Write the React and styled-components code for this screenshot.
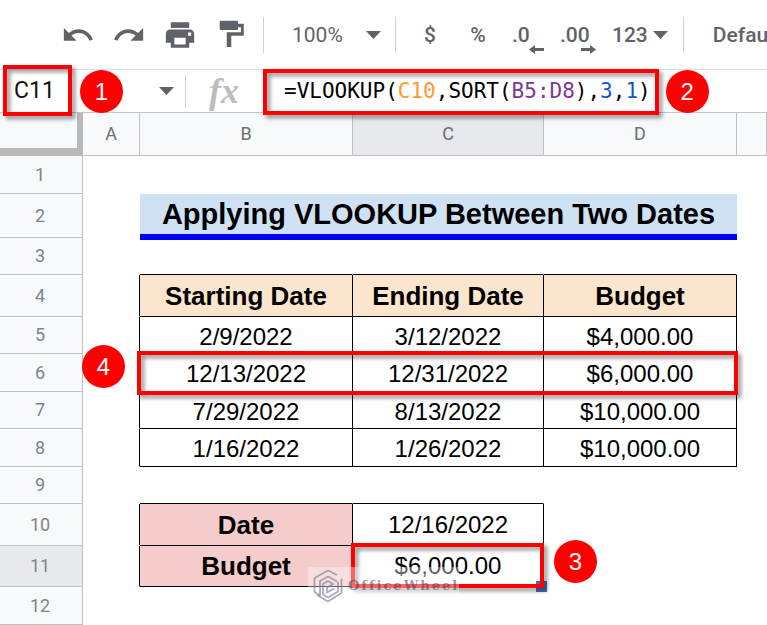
import React from "react";
import styled, { createGlobalStyle, css } from "styled-components";

const GlobalStyle = createGlobalStyle`
  *, *::before, *::after { box-sizing: border-box; }
  body {
    margin: 0;
    background: #fff;
    overflow: hidden;
    font-family: "Liberation Sans", Arial, sans-serif;
  }
`;

const uiFont = `Roboto, "Liberation Sans", sans-serif`;
const iconGray = "#5f6368";
const red = "#ff0000";

/* ---------- annotations ---------- */

const Frame = styled.span`
  position: absolute;
  z-index: 2;
  border: 4px solid ${red};
  filter: drop-shadow(3px 3px 2px rgba(0, 0, 0, 0.45));
  pointer-events: none;
`;

const Badge = styled.span`
  position: absolute;
  z-index: 3;
  width: 43px;
  height: 43px;
  border-radius: 50%;
  background: ${red};
  color: #fff;
  font: 24px/43px "Liberation Sans", Arial, sans-serif;
  text-align: center;
`;

/* ---------- toolbar ---------- */

const Toolbar = styled.div`
  display: flex;
  align-items: center;
  height: 70px;
  padding-left: 61px;
  border-bottom: 1px solid #dadce0;
  overflow: hidden;
`;

const ToolGroup = styled.div`
  display: flex;
  flex: none;
  align-items: center;
  gap: ${(p) => p.$gap}px;
`;

const Separator = styled.span`
  flex: none;
  width: 1px;
  height: ${(p) => p.$height}px;
  margin: 0 ${(p) => p.$after}px 0 ${(p) => p.$before}px;
  background: #d0d3d6;
`;

const ToolButton = styled.button`
  display: flex;
  flex: none;
  align-items: center;
  justify-content: ${(p) => (p.$start ? "flex-start" : "center")};
  gap: 5px;
  position: relative;
  width: ${(p) => (p.$width ? `${p.$width}px` : "auto")};
  height: 34px;
  padding: 0;
  border: 0;
  background: none;
  color: ${iconGray};
  font: 500 21px/32px ${uiFont};
  white-space: nowrap;

  svg { display: block; flex: none; }
`;

const DecimalArrow = styled.svg`
  position: absolute;
  right: -4px;
  bottom: -2px;
`;

const SelectBox = styled.label`
  display: flex;
  flex: none;
  align-items: center;
  position: relative;
  width: 89px;

  svg { position: absolute; right: 0; pointer-events: none; }
`;

const ZoomSelect = styled.select`
  appearance: none;
  width: 100%;
  padding: 0;
  border: 0;
  background: none;
  color: ${iconGray};
  font: 21px/32px ${uiFont};
`;

const Caret = () => (
  <svg width="15" height="8" viewBox="0 0 15 8" aria-hidden="true">
    <path d="M0 0h15L7.500 8z" fill={iconGray} />
  </svg>
);

const UndoIcon = () => (
  <svg width="34" height="34" viewBox="0 0 24 24" fill={iconGray} aria-hidden="true">
    <path d="M12.500 8c-2.650 0-5.050.99-6.900 2.600L2 7v9h9l-3.620-3.620c1.390-1.160 3.160-1.880 5.120-1.880 3.540 0 6.550 2.310 7.600 5.500l2.370-.78C21.080 11.030 17.150 8 12.500 8z" />
  </svg>
);

const RedoIcon = () => (
  <svg width="34" height="34" viewBox="0 0 24 24" fill={iconGray} aria-hidden="true">
    <path d="M18.400 10.600C16.550 8.990 14.150 8 11.500 8c-4.650 0-8.580 3.030-9.960 7.220L3.900 16c1.050-3.190 4.050-5.500 7.600-5.500 1.950 0 3.730.72 5.120 1.880L13 16h9V7l-3.600 3.600z" />
  </svg>
);

const PrintIcon = () => (
  <svg width="34" height="34" viewBox="0 0 24 24" fill={iconGray} fillRule="evenodd" aria-hidden="true">
    <path d="M5.500 3h13v4h-13z" />
    <path d="M5 8.200h14c1.660 0 3 1.340 3 3V17.500h-3.500V21h-13v-3.500H2v-6.300c0-1.660 1.340-3 3-3zM8 14v4.700h8V14zM17.700 10.300v2.200h2.200v-2.200z" />
  </svg>
);

const PaintIcon = () => (
  <svg width="34" height="34" viewBox="0 0 24 24" fill={iconGray} aria-hidden="true">
    <path d="M17 4V3c0-.55-.45-1-1-1H5c-.55 0-1 .45-1 1v4.500c0 .55.45 1 1 1h11c.55 0 1-.45 1-1V6.500h2V10H9v10.500h3.200v-8H21V4z" />
  </svg>
);

/* ---------- formula bar ---------- */

const FormulaBar = styled.div`
  display: flex;
  align-items: center;
  height: 43px;
  border-bottom: 1px solid #c4c6c9;
`;

const NameBox = styled.label`
  display: flex;
  flex: none;
  align-items: center;
  position: relative;
  width: 185px;
  height: 100%;
  padding: 0 11px 0 14px;

  ${Frame} { top: -5px; left: 3px; width: 69px; height: 51px; }
  ${Badge} { top: 0; left: 80px; }
`;

const NameInput = styled.input`
  flex: 1;
  min-width: 0;
  padding: 0;
  border: 0;
  outline: 0;
  background: none;
  color: #111;
  font: 23px/32px ${uiFont};
`;

const FxMark = styled.span`
  flex: none;
  width: 75px;
  color: #bdbdbd;
  font: italic 700 36px/36px "Liberation Serif", "Times New Roman", serif;
`;

const Formula = styled.div`
  position: relative;
  flex: none;
  color: #000;
  font: 21px/40px "DejaVu Sans Mono", monospace;
  white-space: nowrap;

  ${Frame} { top: -2px; right: -8px; bottom: -4px; left: -21px; }
  ${Badge} { top: -1px; right: -58px; }
`;

const Token = styled.span`
  color: ${(p) => p.$color};
`;

/* ---------- sheet ---------- */

const sheetColumns = [
  { id: "A", width: 57 },
  { id: "B", width: 213 },
  { id: "C", width: 191 },
  { id: "D", width: 193 },
];

const Sheet = styled.table`
  width: 100%;
  table-layout: fixed;
  border-collapse: separate;
  border-spacing: 0;
`;

const Col = styled.col`
  width: ${(p) => (p.$width ? `${p.$width}px` : "auto")};
`;

const Row = styled.tr`
  height: ${(p) => p.$height}px;
`;

const headerCell = css`
  padding: 0;
  border: 0 solid #c0c0c0;
  border-width: 0 1px 1px 0;
  background: ${(p) => (p.$active ? "#e8e9ed" : "#f8f9fb")};
  font: 18px/20px ${uiFont};
  text-align: center;
`;

const ColumnHead = styled.th`
  ${headerCell}
  color: #6b6f74;
`;

const RowHead = styled.th`
  ${headerCell}
  padding-right: 2px;
  color: #808388;
`;

const Corner = styled.th`
  padding: 0;
  border: 0 solid #b9b9b9;
  border-width: 0 6px 8px 0;
  background: #f8f9fb;
`;

const line = (on) => `1px solid ${on ? "#000" : "transparent"}`;

const Cell = styled.td`
  position: relative;
  padding: ${(p) => (p.$record ? "3px 0 0" : "0")};
  border-right: ${(p) => line(p.$right)};
  border-bottom: ${(p) => line(p.$bottom)};
  background: ${(p) => p.$fill || "transparent"};
  color: #000;
  font-size: ${(p) => (p.$strong ? 26 : 24)}px;
  font-weight: ${(p) => (p.$strong ? 700 : 400)};
  line-height: 30px;
  text-align: center;
  white-space: nowrap;
`;

const TitleCell = styled.td`
  padding: 0;
  border-bottom: 4px solid #0000ff;
  box-shadow: 0 2px 0 #0000ff;
  background: #cfe2f3;
  color: #000;
  font-size: 29px;
  font-weight: 700;
  line-height: 38px;
  text-align: center;
  white-space: nowrap;
`;

const RowFrame = styled(Frame)`
  top: -3px;
  bottom: -4px;
  left: -3px;
  width: 601px;
`;

const RowBadge = styled(Badge)`
  top: -9px;
  left: -58px;
`;

const CellFrame = styled(Frame)`
  top: -3px;
  right: -1px;
  bottom: -2px;
  left: -2px;
`;

const CellBadge = styled(Badge)`
  top: -6px;
  right: -54px;
`;

const FillHandle = styled.span`
  position: absolute;
  right: -4px;
  bottom: -6px;
  width: 11px;
  height: 11px;
  background: #4472c4;
`;

const Watermark = styled.span`
  position: absolute;
  z-index: 4;
  top: 21px;
  left: -45px;
  display: flex;
  align-items: center;
  gap: 5px;
  height: 38px;
  padding: 0 0 0 5px;
  background: rgba(255, 255, 255, 0.38);
  color: rgba(50, 55, 80, 0.5);
  font: 700 13px/16px "DejaVu Serif", "Liberation Serif", serif;
  letter-spacing: 2px;
`;

const WatermarkLogo = () => (
  <svg width="30" height="34" viewBox="0 0 30 34" fill="none" stroke="#70758a" strokeOpacity="0.6" strokeWidth="1.800" aria-hidden="true">
    <path d="M24 6L15 1.500 1.500 9v14L7 26.500V12l8-4.500 9 5" />
    <path d="M28.500 10v14L15 32.500 4 26" />
    <path d="M25 13v9.500L15 28.500l-5-3V15l5-3 5 3-6 3.500v5l7-4" />
  </svg>
);

const peach = "#fce5cd";
const pink = "#f4cccc";

const records = [
  { id: 5, height: 37, values: ["2/9/2022", "3/12/2022", "$4,000.00"] },
  { id: 6, height: 38, values: ["12/13/2022", "12/31/2022", "$6,000.00"], marked: true },
  { id: 7, height: 37, values: ["7/29/2022", "8/13/2022", "$10,000.00"] },
  { id: 8, height: 38, values: ["1/16/2022", "1/26/2022", "$10,000.00"] },
];

const BlankRow = ({ id, height, ruled = 0 }) => (
  <Row $height={height}>
    <RowHead scope="row">{id}</RowHead>
    <Cell />
    {[1, 2, 3].map((n) => (
      <Cell key={n} $bottom={n <= ruled} />
    ))}
    <Cell />
  </Row>
);

export default function App() {
  return (
    <>
      <GlobalStyle />
      <Toolbar role="toolbar" aria-label="Sheet tools">
        <ToolGroup $gap={17}>
          <ToolButton aria-label="Undo"><UndoIcon /></ToolButton>
          <ToolButton aria-label="Redo"><RedoIcon /></ToolButton>
          <ToolButton aria-label="Print"><PrintIcon /></ToolButton>
          <ToolButton aria-label="Paint format"><PaintIcon /></ToolButton>
        </ToolGroup>
        <Separator $height={36} $before={15} $after={28} />
        <SelectBox>
          <ZoomSelect aria-label="Zoom" defaultValue="100%">
            <option>100%</option>
          </ZoomSelect>
          <Caret />
        </SelectBox>
        <Separator $height={36} $before={14} $after={20} />
        <ToolGroup $gap={20}>
          <ToolButton $width={28} aria-label="Format as currency">$</ToolButton>
          <ToolButton $width={28} aria-label="Format as percent">%</ToolButton>
          <ToolButton $width={28} $start aria-label="Decrease decimal places">
            .0
            <DecimalArrow width="15" height="9" viewBox="0 0 15 9" fill={iconGray} aria-hidden="true">
              <path d="M0 4.500L6 0v3h9v3H6v3z" />
            </DecimalArrow>
          </ToolButton>
          <ToolButton $width={32} $start aria-label="Increase decimal places">
            .00
            <DecimalArrow width="15" height="9" viewBox="0 0 15 9" fill={iconGray} aria-hidden="true">
              <path d="M15 4.500L9 0v3H0v3h9v3z" />
            </DecimalArrow>
          </ToolButton>
          <ToolButton aria-label="More formats">123<Caret /></ToolButton>
        </ToolGroup>
        <Separator $height={36} $before={15} $after={29} />
        <ToolButton aria-label="Font">Default</ToolButton>
      </Toolbar>

      <FormulaBar>
        <NameBox>
          <NameInput aria-label="Name box" defaultValue="C11" />
          <Caret />
          <Frame />
          <Badge>1</Badge>
        </NameBox>
        <Separator $height={33} $before={0} $after={23} />
        <FxMark>fx</FxMark>
        <Formula role="textbox" aria-label="Formula">
          =VLOOKUP(<Token $color="#ff9a2e">C10</Token>,SORT(
          <Token $color="#7e3794">B5:D8</Token>),
          <Token $color="#1155cc">3</Token>,<Token $color="#1155cc">1</Token>)
          <Frame />
          <Badge>2</Badge>
        </Formula>
      </FormulaBar>

      <Sheet>
        <colgroup>
          <Col $width={83} />
          {sheetColumns.map((c) => (
            <Col key={c.id} $width={c.width} />
          ))}
          <Col />
        </colgroup>
        <thead>
          <Row $height={43}>
            <Corner />
            {sheetColumns.map((c) => (
              <ColumnHead key={c.id} scope="col" $active={c.id === "C"}>{c.id}</ColumnHead>
            ))}
            <ColumnHead />
          </Row>
        </thead>
        <tbody>
          <BlankRow id={1} height={38} />
          <Row $height={44}>
            <RowHead scope="row">2</RowHead>
            <Cell />
            <TitleCell colSpan={3}>Applying VLOOKUP Between Two Dates</TitleCell>
            <Cell />
          </Row>
          <BlankRow id={3} height={37} ruled={3} />
          <Row $height={42}>
            <RowHead scope="row">4</RowHead>
            <Cell $right />
            {["Starting Date", "Ending Date", "Budget"].map((text) => (
              <Cell key={text} $right $bottom $strong $fill={peach}>{text}</Cell>
            ))}
            <Cell />
          </Row>
          {records.map((r) => (
            <Row key={r.id} $height={r.height}>
              <RowHead scope="row">{r.id}</RowHead>
              <Cell $right />
              {r.values.map((text, i) => (
                <Cell key={i} $right $bottom $record>
                  {text}
                  {r.marked && i === 0 && (
                    <>
                      <RowFrame />
                      <RowBadge>4</RowBadge>
                    </>
                  )}
                </Cell>
              ))}
              <Cell />
            </Row>
          ))}
          <BlankRow id={9} height={37} ruled={2} />
          <Row $height={42}>
            <RowHead scope="row">10</RowHead>
            <Cell $right />
            <Cell $right $bottom $strong $fill={pink}>Date</Cell>
            <Cell $right $bottom>12/16/2022</Cell>
            <Cell />
            <Cell />
          </Row>
          <Row $height={41}>
            <RowHead scope="row" $active>11</RowHead>
            <Cell $right />
            <Cell $right $bottom $strong $fill={pink}>Budget</Cell>
            <Cell $right $bottom>
              $6,000.00
              <FillHandle />
              <CellFrame />
              <CellBadge>3</CellBadge>
              <Watermark><WatermarkLogo />OfficeWheel</Watermark>
            </Cell>
            <Cell />
            <Cell />
          </Row>
          <BlankRow id={12} height={38} />
        </tbody>
      </Sheet>
    </>
  );
}
